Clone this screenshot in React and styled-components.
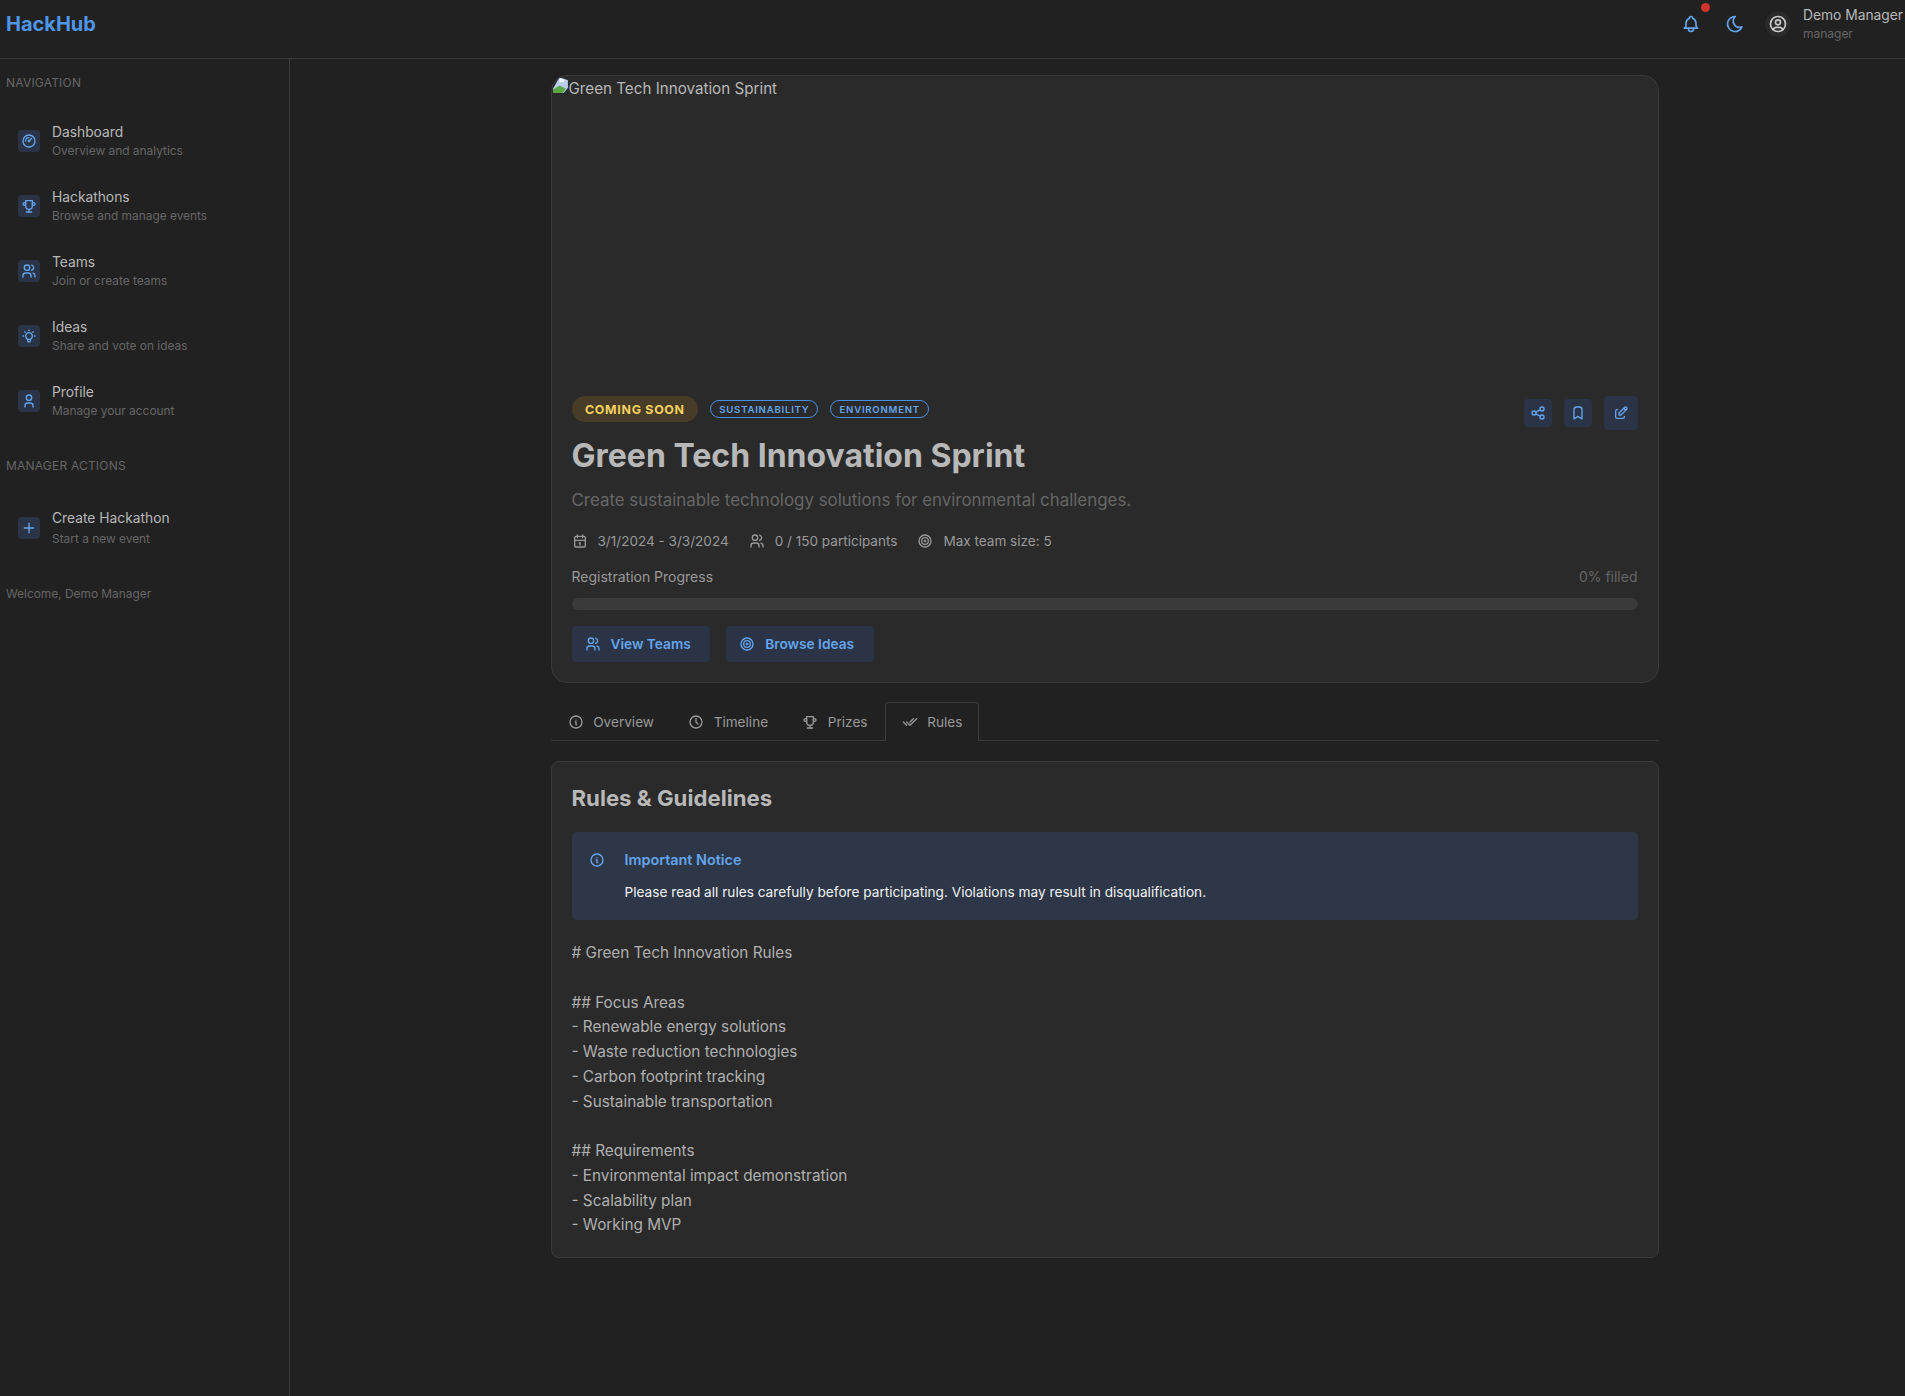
import React from "react";
import styled, { createGlobalStyle } from "styled-components";
import {
  TbGauge, TbTrophy, TbUsers, TbBulb, TbUser, TbPlus, TbBell, TbMoon, TbUserCircle,
  TbCalendar, TbTarget, TbInfoCircle, TbClock, TbChecks, TbShare, TbBookmark, TbEdit,
} from "react-icons/tb";

const Global = createGlobalStyle`
  html, body { margin: 0; padding: 0; background: #212121; }
  body { font-family: Inter, "Liberation Sans", sans-serif; color: #c9c9c9; }
  * { box-sizing: border-box; }
`;

const Page = styled.div`
  width: 1905px;
  height: 1396px;
  display: flex;
  flex-direction: column;
  background: #212121;
  overflow: hidden;
`;
const Header = styled.header`
  height: 59px;
  flex: none;
  display: flex;
  align-items: center;
  justify-content: space-between;
  padding: 0 2px 10px 6px;
  border-bottom: 1px solid #3a3a3a;
`;
const Logo = styled.div`
  font-size: 20px;
  font-weight: 700;
  color: #4f96e8;
  margin-top: -1px;
`;
const HeaderRight = styled.div`
  display: flex;
  align-items: center;
`;
const BellWrap = styled.div`
  position: relative;
  width: 20px;
  height: 20px;
  color: #64a5ee;
  display: flex;
  margin-right: 24px;
  font-size: 20px;
`;
const Dot = styled.span`
  position: absolute;
  top: -11px;
  left: 20px;
  width: 9px;
  height: 9px;
  border-radius: 50%;
  background: #d0342c;
`;
const MoonWrap = styled.div`
  display: flex;
  color: #64a5ee;
  font-size: 20px;
  margin-right: 20px;
`;
const Avatar = styled.div`
  width: 26px;
  height: 26px;
  border-radius: 50%;
  background: #2a2a2a;
  color: #c9c9c9;
  display: flex;
  align-items: center;
  justify-content: center;
  font-size: 20px;
  margin-right: 12px;
`;
const UserBox = styled.div`
  display: flex;
  flex-direction: column;
  gap: 1px;
  margin-top: -1px;
`;
const UserName = styled.div`
  font-size: 13.8px;
  line-height: 20px;
  color: #b8b8b8;
`;
const UserRole = styled.div`
  font-size: 12px;
  line-height: 16px;
  color: #666;
`;
const Body = styled.div`
  flex: 1;
  display: flex;
  min-height: 0;
`;
const Sidebar = styled.aside`
  width: 290px;
  flex: none;
  border-right: 1px solid #3a3a3a;
  padding: 15px 6px 0;
`;
const SectionLabel = styled.div`
  font-size: 12px;
  line-height: 18px;
  letter-spacing: 0.2px;
  color: #666;
  text-transform: uppercase;
  margin-bottom: ${(p) => p.$mb}px;
`;
const NavList = styled.nav`
  display: flex;
  flex-direction: column;
  margin-bottom: 24px;
`;
const NavItem = styled.div`
  height: 65px;
  display: flex;
  align-items: center;
  padding-left: 12px;
  gap: 12px;
`;
const NavIcon = styled.div`
  width: 22px;
  height: 22px;
  flex: none;
  border-radius: 4px;
  background: #2a3446;
  color: #64a5ee;
  display: flex;
  align-items: center;
  justify-content: center;
  font-size: 16px;
`;
const NavText = styled.div`
  display: flex;
  flex-direction: column;
  gap: ${(p) => p.$gap || 0}px;
`;
const NavTitle = styled.div`
  font-size: 13.8px;
  line-height: 20px;
  color: #b8b8b8;
`;
const NavSub = styled.div`
  font-size: 11.9px;
  line-height: 18px;
  color: #666;
`;
const Welcome = styled.div`
  font-size: 11.9px;
  line-height: 18px;
  color: #666;
  margin-top: 25px;
`;
const Main = styled.main`
  flex: 1;
  display: flex;
  justify-content: center;
  padding: 16px 0 0 14px;
`;
const Column = styled.div`
  width: 1108px;
  display: flex;
  flex-direction: column;
`;
const HeroCard = styled.section`
  height: 608px;
  background: #2a2a2a;
  border: 1px solid #3a3a3a;
  border-radius: 16px;
  overflow: hidden;
  display: flex;
  flex-direction: column;
`;
const ImageArea = styled.div`
  height: 300px;
  flex: none;
  display: flex;
  align-items: flex-start;
  font-size: 15.2px;
  line-height: 26px;
  color: #b8b8b8;
`;
const BrokenIcon = styled.svg`
  width: 17px;
  height: 17px;
  flex: none;
  margin-top: 1px;
`;
const HeroBody = styled.div`
  padding: 20px;
  display: flex;
  flex-direction: column;
`;
const TopRow = styled.div`
  display: flex;
  justify-content: space-between;
  align-items: flex-start;
`;
const Badges = styled.div`
  display: flex;
  align-items: center;
  gap: 12px;
  height: 26px;
`;
const StatusBadge = styled.span`
  height: 26px;
  padding: 0 13.5px;
  border-radius: 13px;
  background: #473c27;
  color: #f5d060;
  font-size: 12.4px;
  font-weight: 700;
  letter-spacing: 0.7px;
  display: flex;
  align-items: center;
  text-transform: uppercase;
`;
const TagBadge = styled.span`
  height: 18px;
  padding: 0 8px;
  border-radius: 9px;
  border: 1px solid #4a90e2;
  color: #64a5ee;
  font-size: 9.6px;
  font-weight: 600;
  letter-spacing: 0.78px;
  display: flex;
  align-items: center;
  text-transform: uppercase;
`;
const Actions = styled.div`
  display: flex;
  align-items: center;
  gap: 12px;
`;
const IconBtn = styled.button`
  width: ${(p) => p.$size}px;
  height: ${(p) => p.$size}px;
  border: 0;
  padding: 0;
  border-radius: 4px;
  background: #2a3446;
  color: #64a5ee;
  display: flex;
  align-items: center;
  justify-content: center;
  font-size: 16px;
`;
const Title = styled.h1`
  margin: 5px 0 0;
  font-size: 32px;
  line-height: 42px;
  font-weight: 700;
  color: #b8b8b8;
`;
const Desc = styled.p`
  margin: 11px 0 0;
  font-size: 16.9px;
  line-height: 24px;
  color: #666;
`;
const Meta = styled.div`
  display: flex;
  gap: 20px;
  margin-top: 19px;
`;
const MetaItem = styled.div`
  display: flex;
  align-items: center;
  gap: 10px;
  font-size: 13.55px;
  line-height: 20px;
  color: #999;
  & > svg { font-size: 16px; flex: none; }
`;
const ProgressHead = styled.div`
  display: flex;
  justify-content: space-between;
  margin-top: 16px;
  font-size: 14px;
  line-height: 20px;
`;
const ProgressLabel = styled.span`
  color: #999;
`;
const ProgressValue = styled.span`
  color: #666;
`;
const Track = styled.div`
  height: 12px;
  margin-top: 11px;
  border-radius: 6px;
  background: #3a3a3a;
`;
const Buttons = styled.div`
  display: flex;
  gap: 16px;
  margin-top: 16px;
`;
const Btn = styled.button`
  height: 36px;
  padding: 0 19.5px 0 13px;
  border: 0;
  border-radius: 4px;
  background: #2a3446;
  color: #64a5ee;
  font: 600 13.7px Inter, sans-serif;
  display: flex;
  align-items: center;
  gap: 10px;
  & > svg { font-size: 16px; }
`;
const Tabs = styled.div`
  margin-top: 19px;
  height: 39px;
  display: flex;
  padding-left: 0;
  border-bottom: 1px solid #3a3a3a;
`;
const Tab = styled.div`
  height: 38px;
  padding: 0 16px;
  display: flex;
  align-items: center;
  gap: 9.7px;
  font-size: 13.6px;
  color: #999;
  border: 1px solid ${(p) => (p.$active ? "#3a3a3a" : "transparent")};
  border-bottom: 0;
  border-radius: 4px 4px 0 0;
  ${(p) => p.$active && "height: 39px; background: #212121;"}
  & > svg { font-size: 16px; }
`;
const RulesCard = styled.section`
  margin-top: 20px;
  height: 497px;
  padding: 20px;
  background: #2a2a2a;
  border: 1px solid #3a3a3a;
  border-radius: 8px;
`;
const RulesTitle = styled.h2`
  margin: 0;
  font-size: 22.2px;
  line-height: 31px;
  font-weight: 700;
  color: #b8b8b8;
`;
const Notice = styled.div`
  margin-top: 19px;
  height: 88px;
  padding: 18px 17px 0;
  background: #2d3748;
  border-radius: 4px;
  display: flex;
  gap: 20px;
`;
const NoticeIcon = styled.div`
  color: #64a5ee;
  font-size: 16px;
  display: flex;
  width: 16px;
  height: 20px;
  align-items: center;
`;
const NoticeHead = styled.div`
  font-size: 14.4px;
  font-weight: 600;
  line-height: 20px;
  color: #64a5ee;
`;
const NoticeText = styled.div`
  margin-top: 12px;
  font-size: 13.65px;
  line-height: 20px;
  color: #f2f2f2;
`;
const RulesText = styled.div`
  margin-top: 21px;
  font-size: 15.3px;
  line-height: 24.75px;
  white-space: pre-wrap;
  color: #b0b0b0;
`;

const nav = [
  [TbGauge, "Dashboard", "Overview and analytics"],
  [TbTrophy, "Hackathons", "Browse and manage events"],
  [TbUsers, "Teams", "Join or create teams"],
  [TbBulb, "Ideas", "Share and vote on ideas"],
  [TbUser, "Profile", "Manage your account"],
];

const rules = `# Green Tech Innovation Rules

## Focus Areas
- Renewable energy solutions
- Waste reduction technologies
- Carbon footprint tracking
- Sustainable transportation

## Requirements
- Environmental impact demonstration
- Scalability plan
- Working MVP`;

export default function App() {
  return (
    <Page>
      <Global />
      <Header>
        <Logo>HackHub</Logo>
        <HeaderRight>
          <BellWrap><TbBell /><Dot /></BellWrap>
          <MoonWrap><TbMoon /></MoonWrap>
          <Avatar><TbUserCircle /></Avatar>
          <UserBox>
            <UserName>Demo Manager</UserName>
            <UserRole>manager</UserRole>
          </UserBox>
        </HeaderRight>
      </Header>
      <Body>
        <Sidebar>
          <SectionLabel $mb={16}>Navigation</SectionLabel>
          <NavList>
            {nav.map(([I, t, s]) => (
              <NavItem key={t}>
                <NavIcon><I /></NavIcon>
                <NavText>
                  <NavTitle>{t}</NavTitle>
                  <NavSub>{s}</NavSub>
                </NavText>
              </NavItem>
            ))}
          </NavList>
          <SectionLabel $mb={20}>Manager Actions</SectionLabel>
          <NavItem>
            <NavIcon><TbPlus /></NavIcon>
            <NavText $gap={2}>
              <NavTitle>Create Hackathon</NavTitle>
              <NavSub>Start a new event</NavSub>
            </NavText>
          </NavItem>
          <Welcome>Welcome, Demo Manager</Welcome>
        </Sidebar>
        <Main>
          <Column>
            <HeroCard>
              <ImageArea>
                <BrokenIcon viewBox="0 0 16 16">
                  <path d="M1 11 L6 2 Q7 0.5 9 1 L15 3 L15 10 L11 15 L1 15 Z" fill="#b9cdea" />
                  <path d="M7 1 L12 2.5 L11 5 L7 4.5 Z" fill="#f4f7fb" />
                  <path d="M1 15 L1 12 L7 8 L13 11 L10 15 Z" fill="#5aa845" />
                </BrokenIcon>
                Green Tech Innovation Sprint
              </ImageArea>
              <HeroBody>
                <TopRow>
                  <Badges>
                    <StatusBadge>Coming Soon</StatusBadge>
                    <TagBadge>Sustainability</TagBadge>
                    <TagBadge>Environment</TagBadge>
                  </Badges>
                  <Actions>
                    <IconBtn $size={28}><TbShare /></IconBtn>
                    <IconBtn $size={28}><TbBookmark /></IconBtn>
                    <IconBtn $size={34}><TbEdit /></IconBtn>
                  </Actions>
                </TopRow>
                <Title>Green Tech Innovation Sprint</Title>
                <Desc>Create sustainable technology solutions for environmental challenges.</Desc>
                <Meta>
                  <MetaItem><TbCalendar />3/1/2024 - 3/3/2024</MetaItem>
                  <MetaItem><TbUsers />0 / 150 participants</MetaItem>
                  <MetaItem><TbTarget />Max team size: 5</MetaItem>
                </Meta>
                <ProgressHead>
                  <ProgressLabel>Registration Progress</ProgressLabel>
                  <ProgressValue>0% filled</ProgressValue>
                </ProgressHead>
                <Track />
                <Buttons>
                  <Btn><TbUsers />View Teams</Btn>
                  <Btn><TbTarget />Browse Ideas</Btn>
                </Buttons>
              </HeroBody>
            </HeroCard>
            <Tabs>
              <Tab><TbInfoCircle />Overview</Tab>
              <Tab><TbClock />Timeline</Tab>
              <Tab><TbTrophy />Prizes</Tab>
              <Tab $active><TbChecks />Rules</Tab>
            </Tabs>
            <RulesCard>
              <RulesTitle>Rules &amp; Guidelines</RulesTitle>
              <Notice>
                <NoticeIcon><TbInfoCircle /></NoticeIcon>
                <div>
                  <NoticeHead>Important Notice</NoticeHead>
                  <NoticeText>Please read all rules carefully before participating. Violations may result in disqualification.</NoticeText>
                </div>
              </Notice>
              <RulesText>{rules}</RulesText>
            </RulesCard>
          </Column>
        </Main>
      </Body>
    </Page>
  );
}
